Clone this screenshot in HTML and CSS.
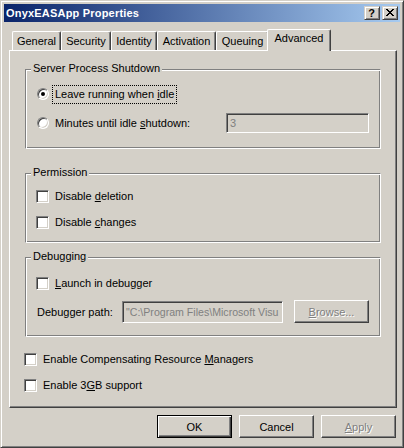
FILE: index.html
```html
<!DOCTYPE html>
<html>
<head>
<meta charset="utf-8">
<title>OnyxEASApp Properties</title>
<link rel="stylesheet" href="styles.css">
</head>
<body>
<div class="window">
  <div class="titlebar">
    <span class="title">OnyxEASApp Properties</span>
    <div class="caption-buttons">
      <div class="cap-btn help">?</div>
      <div class="cap-btn close">
        <svg width="8" height="7" viewBox="0 0 8 7" shape-rendering="crispEdges">
          <rect x="0" y="0" width="2" height="1" fill="#000"/>
          <rect x="6" y="0" width="2" height="1" fill="#000"/>
          <rect x="1" y="1" width="2" height="1" fill="#000"/>
          <rect x="5" y="1" width="2" height="1" fill="#000"/>
          <rect x="2" y="2" width="4" height="1" fill="#000"/>
          <rect x="3" y="3" width="2" height="1" fill="#000"/>
          <rect x="2" y="4" width="4" height="1" fill="#000"/>
          <rect x="1" y="5" width="2" height="1" fill="#000"/>
          <rect x="5" y="5" width="2" height="1" fill="#000"/>
          <rect x="0" y="6" width="2" height="1" fill="#000"/>
          <rect x="6" y="6" width="2" height="1" fill="#000"/>
        </svg>
      </div>
    </div>
  </div>

  <div class="tabs">
    <div class="tab t-general">General</div>
    <div class="tab t-security">Security</div>
    <div class="tab t-identity">Identity</div>
    <div class="tab t-activation">Activation</div>
    <div class="tab t-queuing">Queuing</div>
    <div class="tab t-advanced selected">Advanced</div>
  </div>

  <div class="panel">
    <div class="group g-shutdown">
      <span class="legend">Server Process Shutdown</span>
      <div class="row r-leave">
        <span class="radio checked"></span>
        <span class="label focus">Leave running when <u>i</u>dle</span>
      </div>
      <div class="row r-minutes">
        <span class="radio"></span>
        <span class="label">Minutes until idle <u>s</u>hutdown:</span>
        <div class="field f-minutes">3</div>
      </div>
    </div>

    <div class="group g-permission">
      <span class="legend">Permission</span>
      <div class="row r-check r-first">
        <span class="check"></span>
        <span class="label">Disable <u>d</u>eletion</span>
      </div>
      <div class="row r-check r-next">
        <span class="check"></span>
        <span class="label">Disable <u>c</u>hanges</span>
      </div>
    </div>

    <div class="group g-debug">
      <span class="legend">Debugging</span>
      <div class="row r-check r-launch">
        <span class="check"></span>
        <span class="label"><u>L</u>aunch in debugger</span>
      </div>
      <div class="row r-path">
        <span class="path-label">Debugger path:</span>
        <div class="field f-path">"C:\Program Files\Microsoft Visu</div>
        <div class="btn b-browse disabled"><span><u>B</u>rowse...</span></div>
      </div>
    </div>

    <div class="row r-check r-outer r-crm">
      <span class="check"></span>
      <span class="label">Enable Compensating Resource <u>M</u>anagers</span>
    </div>
    <div class="row r-check r-outer r-3gb">
      <span class="check"></span>
      <span class="label">Enable 3<u>G</u>B support</span>
    </div>
  </div>

  <div class="buttons">
    <div class="btn default">OK</div>
    <div class="btn">Cancel</div>
    <div class="btn disabled"><span><u>A</u>pply</span></div>
  </div>
</div>
</body>
</html>
```

FILE: styles.css
```css
* { box-sizing: border-box; }

html, body {
  margin: 0;
  padding: 0;
}

body {
  width: 404px;
  height: 448px;
  overflow: hidden;
  background: #D4D0C8;
  font-family: "Liberation Sans", Arial, sans-serif;
  font-size: 11px;
  color: #000;
}

u { text-decoration: underline; text-underline-offset: 1px; }

/* ---------- window frame ---------- */
.window {
  width: 404px;
  height: 448px;
  background: #D4D0C8;
  border: 1px solid;
  border-color: #D4D0C8 #404040 #404040 #D4D0C8;
  box-shadow: inset 1px 1px 0 #fff, inset -1px -1px 0 #808080;
  padding: 3px 3px 9px 3px;
  display: flex;
  flex-direction: column;
}

.titlebar {
  height: 18px;
  flex: none;
  display: flex;
  align-items: center;
  padding-left: 2px;
  background: linear-gradient(to right, #0A246A, #A6CAF0);
}

.title {
  color: #fff;
  font-weight: bold;
  font-size: 11px;
  letter-spacing: 0.2px;
  white-space: nowrap;
}

.caption-buttons {
  margin-left: auto;
  display: flex;
  gap: 2px;
  padding-right: 2px;
}

.cap-btn {
  width: 16px;
  height: 14px;
  background: #D4D0C8;
  border: 1px solid;
  border-color: #D4D0C8 #404040 #404040 #D4D0C8;
  box-shadow: inset 1px 1px 0 #fff, inset -1px -1px 0 #808080;
  display: flex;
  align-items: center;
  justify-content: center;
}

.cap-btn.help {
  font-weight: bold;
  font-size: 11px;
  line-height: 12px;
  padding-right: 1px;
}

.cap-btn.close svg { display: block; margin-right: 1px; margin-top: -1px; }

/* ---------- tabs ---------- */
.tabs {
  margin-top: 7px;
  height: 21px;
  flex: none;
  display: flex;
  align-items: flex-end;
  padding-left: 8px;
}

.tab {
  height: 19px;
  flex: none;
  background: #D4D0C8;
  border-top: 1px solid #fff;
  border-left: 1px solid #fff;
  border-right: 1px solid #404040;
  border-radius: 2px 2px 0 0;
  box-shadow: inset -1px 0 0 #808080;
  display: flex;
  align-items: center;
  justify-content: center;
  padding-bottom: 1px;
  white-space: nowrap;
}

.t-general { width: 49px; }
.t-security { width: 50px; }
.t-identity { width: 46px; }
.t-activation { width: 59px; }
.t-queuing { width: 53px; }
.t-advanced { width: 60px; }

.tab.selected {
  width: 64px;
  height: 22px;
  margin: 0 -2px -1px -2px;
  position: relative;
  z-index: 1;
  padding-bottom: 5px;
}

/* ---------- panel ---------- */
.panel {
  margin-left: 5px;
  width: 388px;
  height: 358px;
  flex: none;
  border: 1px solid;
  border-color: #fff #404040 #404040 #fff;
  box-shadow: inset -1px -1px 0 #808080;
  padding: 0 15px;
  display: flex;
  flex-direction: column;
}

.group {
  position: relative;
  flex: none;
  border: 1px solid;
  border-color: #808080 #fff #fff #808080;
  box-shadow: inset 1px 1px 0 #fff, inset -1px -1px 0 #808080;
  display: flex;
  flex-direction: column;
}

.legend {
  position: absolute;
  top: -8px;
  left: 5px;
  padding: 0 2px;
  line-height: 13px;
  background: #D4D0C8;
  white-space: nowrap;
}

.g-shutdown { margin-top: 18px; height: 80px; padding-left: 11px; }
.g-permission { margin-top: 24px; height: 70px; padding-left: 10px; }
.g-debug { margin-top: 14px; height: 80px; padding-left: 10px; }

.row {
  display: flex;
  align-items: center;
  flex: none;
  white-space: nowrap;
}

.label {
  margin-left: 4px;
  padding: 0 2px;
  line-height: 15px;
}

.label.focus {
  outline: 1px dotted #000;
  outline-offset: 0;
  padding: 1px 2px 1px 2px;
}

.r-leave { margin-top: 16px; height: 16px; }
.r-minutes { margin-top: 11px; height: 20px; }

.r-check { height: 13px; }
.r-first { margin-top: 16px; }
.r-next { margin-top: 13px; }
.r-launch { margin-top: 19px; }
.r-path { margin-top: 10px; height: 23px; padding-left: 1px; }

.r-outer { margin-left: -1px; }
.r-crm { margin-top: 16px; }
.r-3gb { margin-top: 13px; }

/* ---------- controls ---------- */
.radio {
  width: 12px;
  height: 12px;
  flex: none;
  position: relative;
  border-radius: 50%;
  background: #fff;
  border: 1px solid;
  border-color: #808080 #fff #fff #808080;
  box-shadow: inset 1px 1px 0 #404040, inset -1px -1px 0 #D4D0C8;
}

.radio.checked::after {
  content: "";
  position: absolute;
  left: 3px;
  top: 3px;
  width: 4px;
  height: 4px;
  border-radius: 50%;
  background: #000;
}

.check {
  width: 13px;
  height: 13px;
  flex: none;
  background: #fff;
  border: 1px solid;
  border-color: #808080 #fff #fff #808080;
  box-shadow: inset 1px 1px 0 #404040, inset -1px -1px 0 #D4D0C8;
}

.field {
  flex: none;
  background: #D4D0C8;
  color: #808080;
  border: 1px solid;
  border-color: #808080 #fff #fff #808080;
  box-shadow: inset 1px 1px 0 #404040, inset -1px -1px 0 #D4D0C8;
  display: flex;
  align-items: center;
  padding-left: 3px;
  white-space: nowrap;
  overflow: hidden;
}

.f-minutes {
  width: 143px;
  height: 20px;
  margin-left: auto;
  margin-right: 11px;
}

.path-label {
  width: 85px;
  flex: none;
}

.f-path {
  width: 161px;
  height: 22px;
  font-size: 10.6px;
}

.btn {
  width: 75px;
  height: 23px;
  flex: none;
  background: #D4D0C8;
  border: 1px solid;
  border-color: #fff #404040 #404040 #fff;
  box-shadow: inset -1px -1px 0 #808080;
  display: flex;
  align-items: center;
  justify-content: center;
  white-space: nowrap;
}

.btn.default {
  border-color: #000;
  box-shadow: inset 1px 1px 0 #fff, inset -1px -1px 0 #404040, inset -2px -2px 0 #808080;
}

.btn.disabled span {
  color: #808080;
  text-shadow: 1px 1px 0 #fff;
}

.b-browse { margin-left: 11px; }

.buttons {
  margin-top: 7px;
  flex: none;
  display: flex;
  justify-content: flex-end;
  gap: 7px;
  padding-right: 4px;
}
```
